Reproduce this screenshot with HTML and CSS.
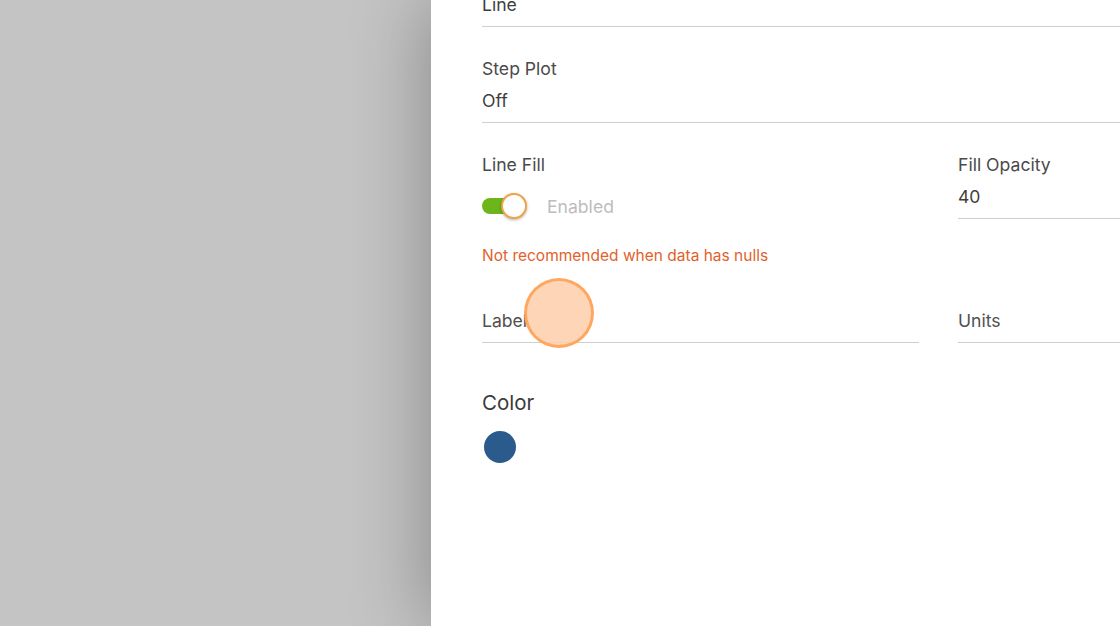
FILE: index.html
```html
<!DOCTYPE html>
<html>
<head>
<meta charset="utf-8">
<link rel="stylesheet" href="styles.css">
</head>
<body>
<div class="screen">
  <div class="backdrop"></div>
  <div class="panel">
    <div class="content">
      <div class="field first">
        <div class="value">Line</div>
      </div>
      <div class="field">
        <div class="label">Step Plot</div>
        <div class="value">Off</div>
      </div>
      <div class="row">
        <div class="col fillcol">
          <div class="label">Line Fill</div>
          <div class="toggle-row">
            <div class="toggle"><span class="track"></span><span class="knob"></span></div>
            <span class="toggle-text">Enabled</span>
          </div>
          <div class="warning">Not recommended when data has nulls</div>
        </div>
        <div class="col">
          <div class="field">
            <div class="label">Fill Opacity</div>
            <div class="value">40</div>
          </div>
        </div>
      </div>
      <div class="row inputs">
        <div class="col"><div class="field"><div class="value placeholder">Label</div></div></div>
        <div class="col"><div class="field"><div class="value placeholder">Units</div></div></div>
      </div>
      <div class="heading">Color</div>
      <div class="swatch"></div>
    </div>
    <div class="touch"></div>
  </div>
</div>
</body>
</html>
```

FILE: styles.css
```css
html, body {
  margin: 0;
  padding: 0;
  width: 1120px;
  height: 626px;
  overflow: hidden;
}
body {
  font-family: "Inter", "Liberation Sans", sans-serif;
  color: #4a4a4a;
}
.screen {
  display: flex;
  width: 1120px;
  height: 626px;
  background: #c4c4c4;
}
.backdrop {
  width: 431px;
  flex: none;
}
.panel {
  position: relative;
  flex: none;
  width: 1000px;
  height: 626px;
  background: #fff;
  box-shadow: -6px 0 70px rgba(0, 0, 0, 0.28);
}
.content {
  width: 915px;
  padding-left: 51px;
  padding-top: 1px;
}
.field {
  border-bottom: 1px solid #cfcfcf;
  padding-top: 1px;
  padding-bottom: 9px;
  margin-bottom: 29px;
}
.field.first {
  margin-top: -9px;
}
.label, .value {
  font-size: 17.6px;
  line-height: 24px;
}
.label {
  margin-bottom: 8px;
}
.value {
  color: #3e3e3e;
}
.value.placeholder {
  color: #505050;
}
.row {
  display: flex;
  gap: 39px;
}
.col {
  width: 437px;
  flex: none;
}
.fillcol {
  padding-top: 1px;
}
.toggle-row {
  display: flex;
  align-items: center;
  height: 32px;
  margin-top: 13px;
}
.toggle {
  position: relative;
  width: 46px;
  height: 32px;
}
.track {
  position: absolute;
  left: 0;
  top: 8px;
  width: 38px;
  height: 16px;
  border-radius: 8px;
  background: #6cb61c;
}
.knob {
  position: absolute;
  left: 19px;
  top: 3px;
  width: 22px;
  height: 22px;
  border-radius: 50%;
  background: #fff;
  border: 2px solid #f0a347;
  box-shadow: 0 1px 3px rgba(0, 0, 0, 0.3);
}
.toggle-text {
  margin-left: 19px;
  font-size: 17.6px;
  color: #bdbdbd;
}
.warning {
  margin-top: 24px;
  font-size: 15.5px;
  line-height: 20px;
  color: #e0622b;
}
.inputs {
  margin-top: 43px;
}
.inputs .field {
  margin-bottom: 0;
  padding-top: 0;
  padding-bottom: 9px;
}
.heading {
  margin-top: 46px;
  font-size: 20.5px;
  line-height: 28px;
  color: #3a3a3a;
}
.swatch {
  margin-top: 14px;
  margin-left: 2px;
  width: 32px;
  height: 32px;
  border-radius: 50%;
  background: #2b5b8c;
}
.touch {
  position: absolute;
  left: 93px;
  top: 278px;
  width: 64px;
  height: 64px;
  border-radius: 50%;
  background: rgba(255, 206, 171, 0.85);
  border: 3px solid rgba(255, 160, 80, 0.85);
}
```
